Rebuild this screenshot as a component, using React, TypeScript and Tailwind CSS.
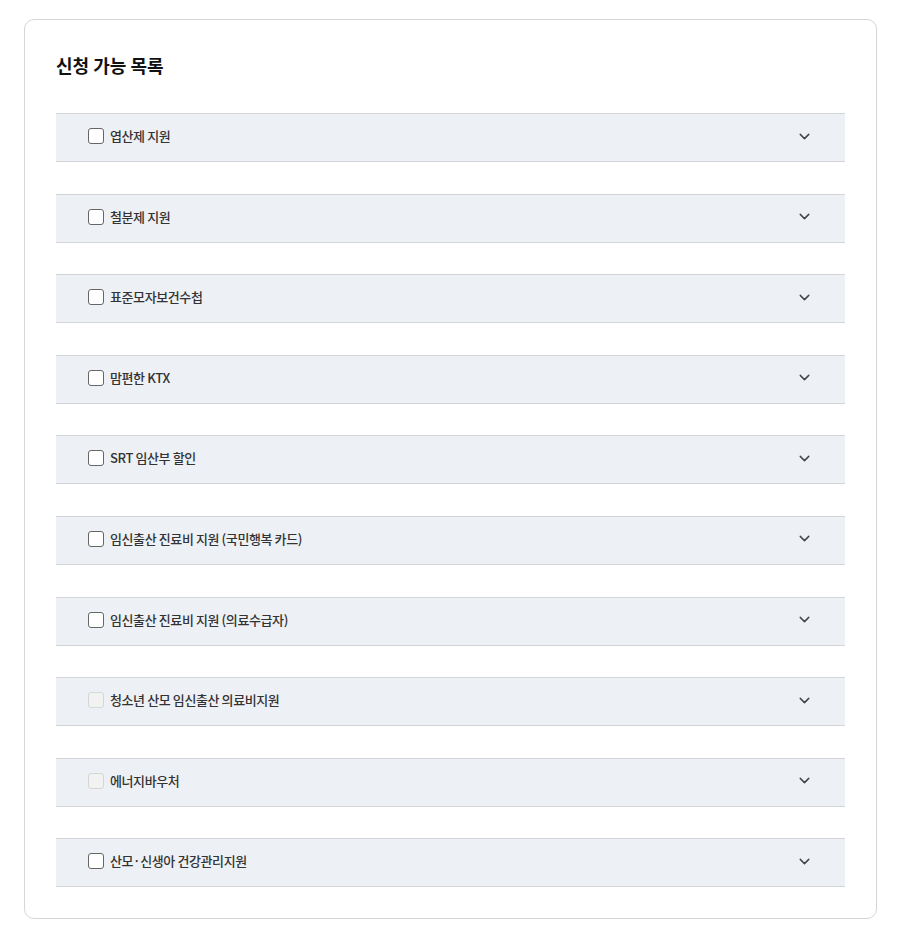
import { ChevronDown } from 'lucide-react'

interface Item {
  label: string
  disabled?: boolean
}

const items: Item[] = [
  { label: '엽산제 지원' },
  { label: '철분제 지원' },
  { label: '표준모자보건수첩' },
  { label: '맘편한 KTX' },
  { label: 'SRT 임산부 할인' },
  { label: '임신출산 진료비 지원 (국민행복 카드)' },
  { label: '임신출산 진료비 지원 (의료수급자)' },
  { label: '청소년 산모 임신출산 의료비지원', disabled: true },
  { label: '에너지바우처', disabled: true },
  { label: '산모·신생아 건강관리지원' },
]

function Row({ item }: { item: Item }) {
  return (
    <div className="h-[49px] flex items-center bg-[#edf0f4] border-y border-[#d2d4d8] pl-[32px] pr-[32px] pb-[3px]">
      <span
        className={`w-[16px] h-[16px] rounded-[3px] border-[1.5px] shrink-0 ${
          item.disabled ? 'border-[#d6d6d6] bg-[#f2f2f2]' : 'border-[#666] bg-white'
        }`}
      />
      <span className="ml-[6px] text-[13px] tracking-[-0.4px] font-medium text-[#333] leading-none -mt-[1px]">
        {item.label}
      </span>
      <ChevronDown className="ml-auto w-[17px] h-[17px] text-[#444]" strokeWidth={2} />
    </div>
  )
}

export default function App() {
  return (
    <div
      className="min-h-[938px] bg-white pt-[19px] pl-[24px]"
      style={{ fontFamily: '"Noto Sans CJK KR", "Noto Sans", sans-serif' }}
    >
      <div className="w-[853px] border border-[#d6d6d6] rounded-[10px] px-[31px] pt-[32px] pb-[31px]">
        <h2 className="text-[18px] font-bold text-[#111] leading-[26px] mb-[35px]">신청 가능 목록</h2>
        <div className="flex flex-col gap-[31.6px]">
          {items.map((it) => (
            <Row key={it.label} item={it} />
          ))}
        </div>
      </div>
    </div>
  )
}
